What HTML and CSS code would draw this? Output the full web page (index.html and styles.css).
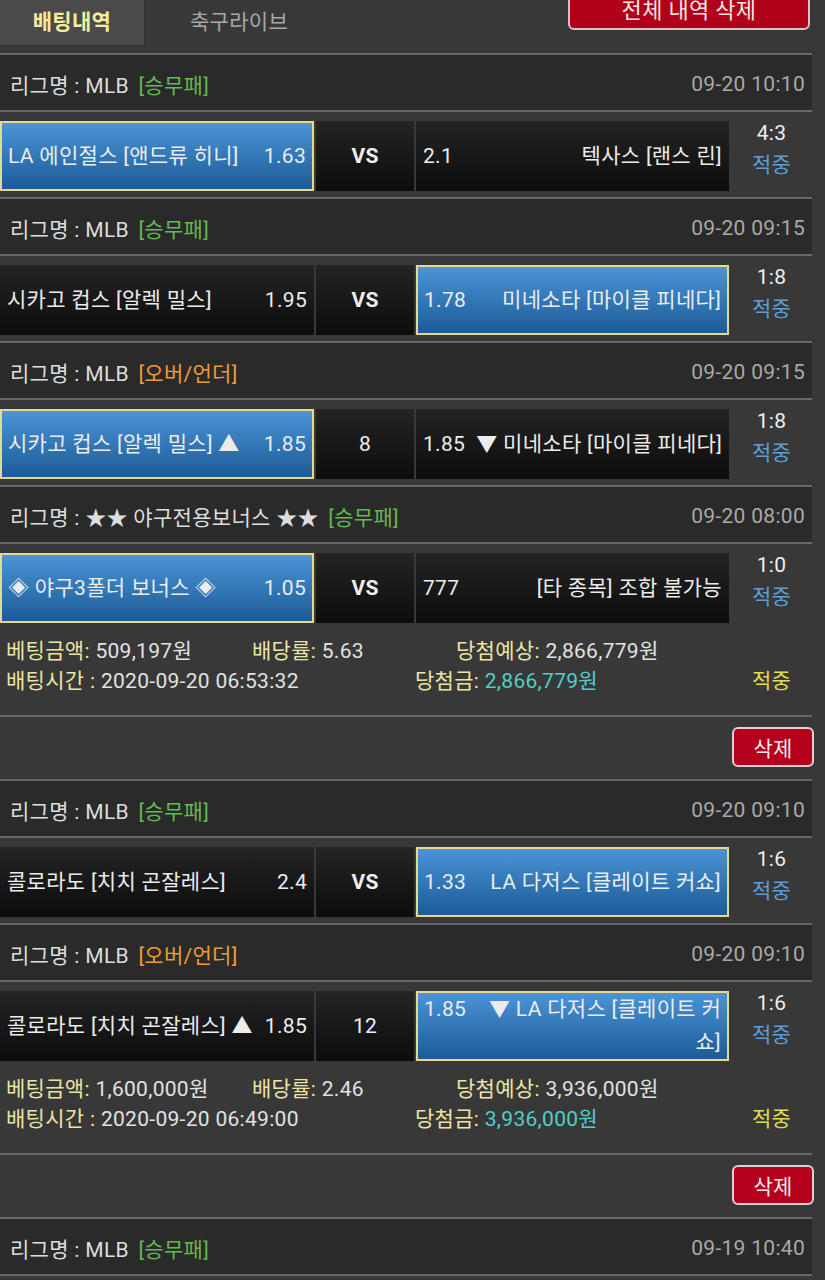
FILE: index.html
```html
<!DOCTYPE html>
<html lang="ko">
<head>
    <meta charset="UTF-8">
    <meta name="viewport" content="width=device-width, initial-scale=1.0">
    <title>배팅내역</title>
    <link rel="stylesheet" href="styles.css">
</head>
<body>
    <div class="page">
        <div class="tabs">
            <div class="tab active">배팅내역</div>
            <div class="tab">축구라이브</div>
            <button class="del-all">전체 내역 삭제</button>
        </div>

        <!-- bet 1 -->
        <div class="bet">
            <div class="game">
                <div class="league"><span>리그명 : MLB <span class="type win">[승무패]</span></span><span class="date">09-20 10:10</span></div>
                <div class="match">
                    <div class="pick home sel"><span class="team">LA 에인절스 [앤드류 히니]</span><span class="odds">1.63</span></div>
                    <div class="mid vs">VS</div>
                    <div class="pick away"><span class="odds">2.1</span><span class="team">텍사스 [랜스 린]</span></div>
                    <div class="result"><span class="score">4:3</span><span class="hit">적중</span></div>
                </div>
            </div>
            <div class="game">
                <div class="league"><span>리그명 : MLB <span class="type win">[승무패]</span></span><span class="date">09-20 09:15</span></div>
                <div class="match">
                    <div class="pick home"><span class="team">시카고 컵스 [알렉 밀스]</span><span class="odds">1.95</span></div>
                    <div class="mid vs">VS</div>
                    <div class="pick away sel"><span class="odds">1.78</span><span class="team">미네소타 [마이클 피네다]</span></div>
                    <div class="result"><span class="score">1:8</span><span class="hit">적중</span></div>
                </div>
            </div>
            <div class="game">
                <div class="league"><span>리그명 : MLB <span class="type ou">[오버/언더]</span></span><span class="date">09-20 09:15</span></div>
                <div class="match">
                    <div class="pick home sel"><span class="team">시카고 컵스 [알렉 밀스] ▲</span><span class="odds">1.85</span></div>
                    <div class="mid">8</div>
                    <div class="pick away"><span class="odds">1.85</span><span class="team">▼ 미네소타 [마이클 피네다]</span></div>
                    <div class="result"><span class="score">1:8</span><span class="hit">적중</span></div>
                </div>
            </div>
            <div class="game">
                <div class="league"><span>리그명 : ★★ 야구전용보너스 ★★ <span class="type win">[승무패]</span></span><span class="date">09-20 08:00</span></div>
                <div class="match">
                    <div class="pick home sel"><span class="team">◈ 야구3폴더 보너스 ◈</span><span class="odds">1.05</span></div>
                    <div class="mid vs">VS</div>
                    <div class="pick away"><span class="odds">777</span><span class="team">[타 종목] 조합 불가능</span></div>
                    <div class="result"><span class="score">1:0</span><span class="hit">적중</span></div>
                </div>
            </div>
            <div class="summary">
                <div class="sum-line">
                    <span class="c1"><span class="label">베팅금액:</span> 509,197원</span>
                    <span class="c2"><span class="label">배당률:</span> 5.63</span>
                    <span><span class="label">당첨예상:</span> 2,866,779원</span>
                </div>
                <div class="sum-line">
                    <span class="c3"><span class="label">배팅시간 :</span> 2020-09-20 06:53:32</span>
                    <span class="c4"><span class="label">당첨금:</span> <span class="won">2,866,779원</span></span>
                    <span class="status">적중</span>
                </div>
            </div>
        </div>
        <div class="actions"><button class="del">삭제</button></div>

        <!-- bet 2 -->
        <div class="bet">
            <div class="game">
                <div class="league"><span>리그명 : MLB <span class="type win">[승무패]</span></span><span class="date">09-20 09:10</span></div>
                <div class="match">
                    <div class="pick home"><span class="team">콜로라도 [치치 곤잘레스]</span><span class="odds">2.4</span></div>
                    <div class="mid vs">VS</div>
                    <div class="pick away sel"><span class="odds">1.33</span><span class="team">LA 다저스 [클레이트 커쇼]</span></div>
                    <div class="result"><span class="score">1:6</span><span class="hit">적중</span></div>
                </div>
            </div>
            <div class="game">
                <div class="league"><span>리그명 : MLB <span class="type ou">[오버/언더]</span></span><span class="date">09-20 09:10</span></div>
                <div class="match">
                    <div class="pick home"><span class="team">콜로라도 [치치 곤잘레스] ▲</span><span class="odds">1.85</span></div>
                    <div class="mid">12</div>
                    <div class="pick away sel"><span class="odds">1.85</span><span class="team">▼ LA 다저스 [클레이트 커쇼]</span></div>
                    <div class="result"><span class="score">1:6</span><span class="hit">적중</span></div>
                </div>
            </div>
            <div class="summary">
                <div class="sum-line">
                    <span class="c1"><span class="label">베팅금액:</span> 1,600,000원</span>
                    <span class="c2"><span class="label">배당률:</span> 2.46</span>
                    <span><span class="label">당첨예상:</span> 3,936,000원</span>
                </div>
                <div class="sum-line">
                    <span class="c3"><span class="label">배팅시간 :</span> 2020-09-20 06:49:00</span>
                    <span class="c4"><span class="label">당첨금:</span> <span class="won">3,936,000원</span></span>
                    <span class="status">적중</span>
                </div>
            </div>
        </div>
        <div class="actions"><button class="del">삭제</button></div>

        <!-- bet 3 -->
        <div class="bet">
            <div class="game">
                <div class="league"><span>리그명 : MLB <span class="type win">[승무패]</span></span><span class="date">09-19 10:40</span></div>
            </div>
        </div>
    </div>
</body>
</html>
```

FILE: styles.css
```css
body {
    margin: 0;
    background-color: #383838;
    font-family: Roboto, "Noto Sans CJK KR", sans-serif;
    font-size: 21px;
    letter-spacing: 0.3px;
    color: #e6e6e6;
    overflow: hidden;
}
.page {
    width: 812px;
}
.tabs {
    display: flex;
    align-items: flex-start;
    height: 46px;
    margin-bottom: 7px;
}
.tab {
    height: 46px;
    line-height: 44px;
    box-sizing: border-box;
    padding: 0 45px 0 45px;
    color: #a8a8a8;
}
.tab.active {
    width: 145px;
    padding: 0;
    text-align: center;
    background-color: #4a4a4a;
    border-right: 1px solid #2e2e2e;
    border-bottom: 1px solid #2e2e2e;
    color: #f2ee9a;
    font-weight: bold;
}
.del-all {
    margin-left: auto;
    margin-right: 2px;
    margin-top: -14px;
    width: 242px;
    height: 44px;
    padding: 0;
    background-color: #b10019;
    border: 2px solid #d9c4c4;
    border-radius: 6px;
    color: #f4e6e6;
    font-family: inherit;
    font-size: 22px;
    letter-spacing: 0.3px;
}
.league {
    display: flex;
    justify-content: space-between;
    align-items: center;
    height: 59px;
    padding: 2px 7px 0 10px;
    box-sizing: border-box;
    background-color: #2a2a2a;
    border-top: 2px solid #676767;
    border-bottom: 2px solid #676767;
    color: #dedede;
}
.type.win {
    margin-left: 4px;
    color: #63b84e;
}
.type.ou {
    margin-left: 4px;
    color: #f09a34;
}
.date {
    color: #a9a9a9;
}
.match {
    display: grid;
    grid-template-columns: 314px 98px 313px 1fr;
    column-gap: 2px;
    padding: 9px 0 6px;
}
.pick, .mid {
    height: 70px;
    box-sizing: border-box;
    background: linear-gradient(#242424, #0c0c0c);
}
.pick {
    display: grid;
    align-content: center;
    align-items: baseline;
    column-gap: 10px;
    padding: 0 7px;
    line-height: 33px;
    color: #ececec;
}
.home {
    grid-template-columns: 1fr auto;
}
.away {
    grid-template-columns: auto 1fr;
}
.away .team {
    text-align: right;
}
.pick.sel {
    background: linear-gradient(#4b94d6, #1b5b97);
    border: 2px solid #e6d88e;
    padding: 0 6px;
}
.mid {
    display: flex;
    align-items: center;
    justify-content: center;
    color: #efefef;
}
.mid.vs {
    font-weight: bold;
}
.result {
    display: flex;
    flex-direction: column;
    align-items: center;
    margin-top: -4px;
    line-height: 32px;
}
.score {
    color: #eeeeee;
}
.hit {
    color: #5a9fd8;
}
.summary {
    padding: 7px 0 19px 6px;
    border-bottom: 2px solid #676767;
    line-height: 30px;
    color: #e2e2e2;
}
.sum-line {
    display: flex;
}
.c1 {
    width: 246px;
}
.c2 {
    width: 204px;
}
.c3 {
    width: 409px;
}
.c4 {
    width: 337px;
}
.label {
    color: #ece4a2;
}
.won {
    color: #4fd0c6;
}
.status {
    color: #e4da52;
}
.actions {
    display: flex;
    justify-content: flex-end;
    padding: 10px 0 12px;
}
.del {
    width: 82px;
    height: 40px;
    padding: 0;
    margin-right: -2px;
    background-color: #b4001c;
    border: 2px solid #dcd0d0;
    border-radius: 6px;
    color: #f6e8e8;
    font-family: inherit;
    font-size: 21px;
    letter-spacing: 0.3px;
}
```
